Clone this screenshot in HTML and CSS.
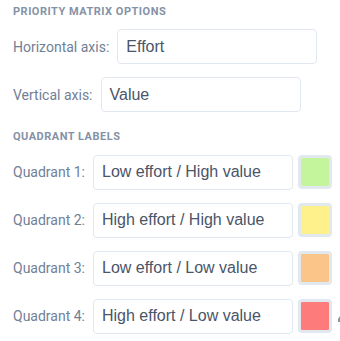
FILE: index.html
```html
<!DOCTYPE html>
<html>
<head>
<meta charset="utf-8">
<link rel="stylesheet" href="styles.css">
</head>
<body>
<div class="panel">
  <section class="section">
    <h3 class="heading">Priority Matrix Options</h3>
    <div class="rows">
      <div class="row"><label class="label">Horizontal axis:</label><div class="field">Effort</div></div>
      <div class="row"><label class="label">Vertical axis:</label><div class="field">Value</div></div>
    </div>
  </section>
  <section class="section">
    <h3 class="heading">Quadrant Labels</h3>
    <div class="rows">
      <div class="row"><label class="label">Quadrant 1:</label><div class="field">Low effort / High value</div><div class="swatch"><span class="chip green"></span></div></div>
      <div class="row"><label class="label">Quadrant 2:</label><div class="field">High effort / High value</div><div class="swatch"><span class="chip yellow"></span></div></div>
      <div class="row"><label class="label">Quadrant 3:</label><div class="field">Low effort / Low value</div><div class="swatch"><span class="chip orange"></span></div></div>
      <div class="row"><label class="label">Quadrant 4:</label><div class="field">High effort / Low value</div><div class="swatch"><span class="chip red"></span></div><svg class="handle" width="3" height="8" viewBox="0 0 3 8"><path d="M0 8 L0 5 L3 0.5 L3 8 Z" fill="#8a96a6"/></svg></div>
    </div>
  </section>
</div>
</body>
</html>
```
FILE: styles.css
```css
html, body {
  margin: 0;
  padding: 0;
  background: #ffffff;
  overflow: hidden;
}
.panel {
  padding: 3.8px 0 0 13px;
  display: flex;
  flex-direction: column;
  gap: 17.2px;
}
.heading {
  margin: 0 0 9.4px 0;
  font-family: Roboto, "Liberation Sans", sans-serif;
  font-size: 11px;
  line-height: 16px;
  font-weight: 700;
  letter-spacing: 0.5px;
  text-transform: uppercase;
  color: #8492a6;
}
.rows {
  display: flex;
  flex-direction: column;
  gap: 13px;
}
.row {
  display: flex;
  align-items: center;
  height: 35px;
}
.label {
  font-family: Roboto, "Liberation Sans", sans-serif;
  font-size: 14px;
  color: #718096;
  margin-right: 8px;
  white-space: nowrap;
}
.field {
  box-sizing: border-box;
  width: 200px;
  height: 35px;
  border: 1px solid #e2e8f0;
  border-radius: 4px;
  padding: 0 8px;
  display: flex;
  align-items: center;
  font-family: "Liberation Sans", Arial, sans-serif;
  font-size: 16px;
  color: #4a5568;
  white-space: nowrap;
  flex-shrink: 0;
}
.swatch {
  box-sizing: border-box;
  width: 34px;
  height: 34px;
  margin-left: 4.5px;
  border: 3px solid #e2e8f0;
  border-radius: 4px;
  display: flex;
  flex-shrink: 0;
}
.chip {
  flex: 1;
  border-radius: 1px;
}
.green { background: #c4f59c; }
.yellow { background: #fef08a; }
.orange { background: #fbc589; }
.red { background: #fe7b7b; }
.handle {
  margin-left: 6px;
  margin-top: 4px;
  flex-shrink: 0;
}
```
